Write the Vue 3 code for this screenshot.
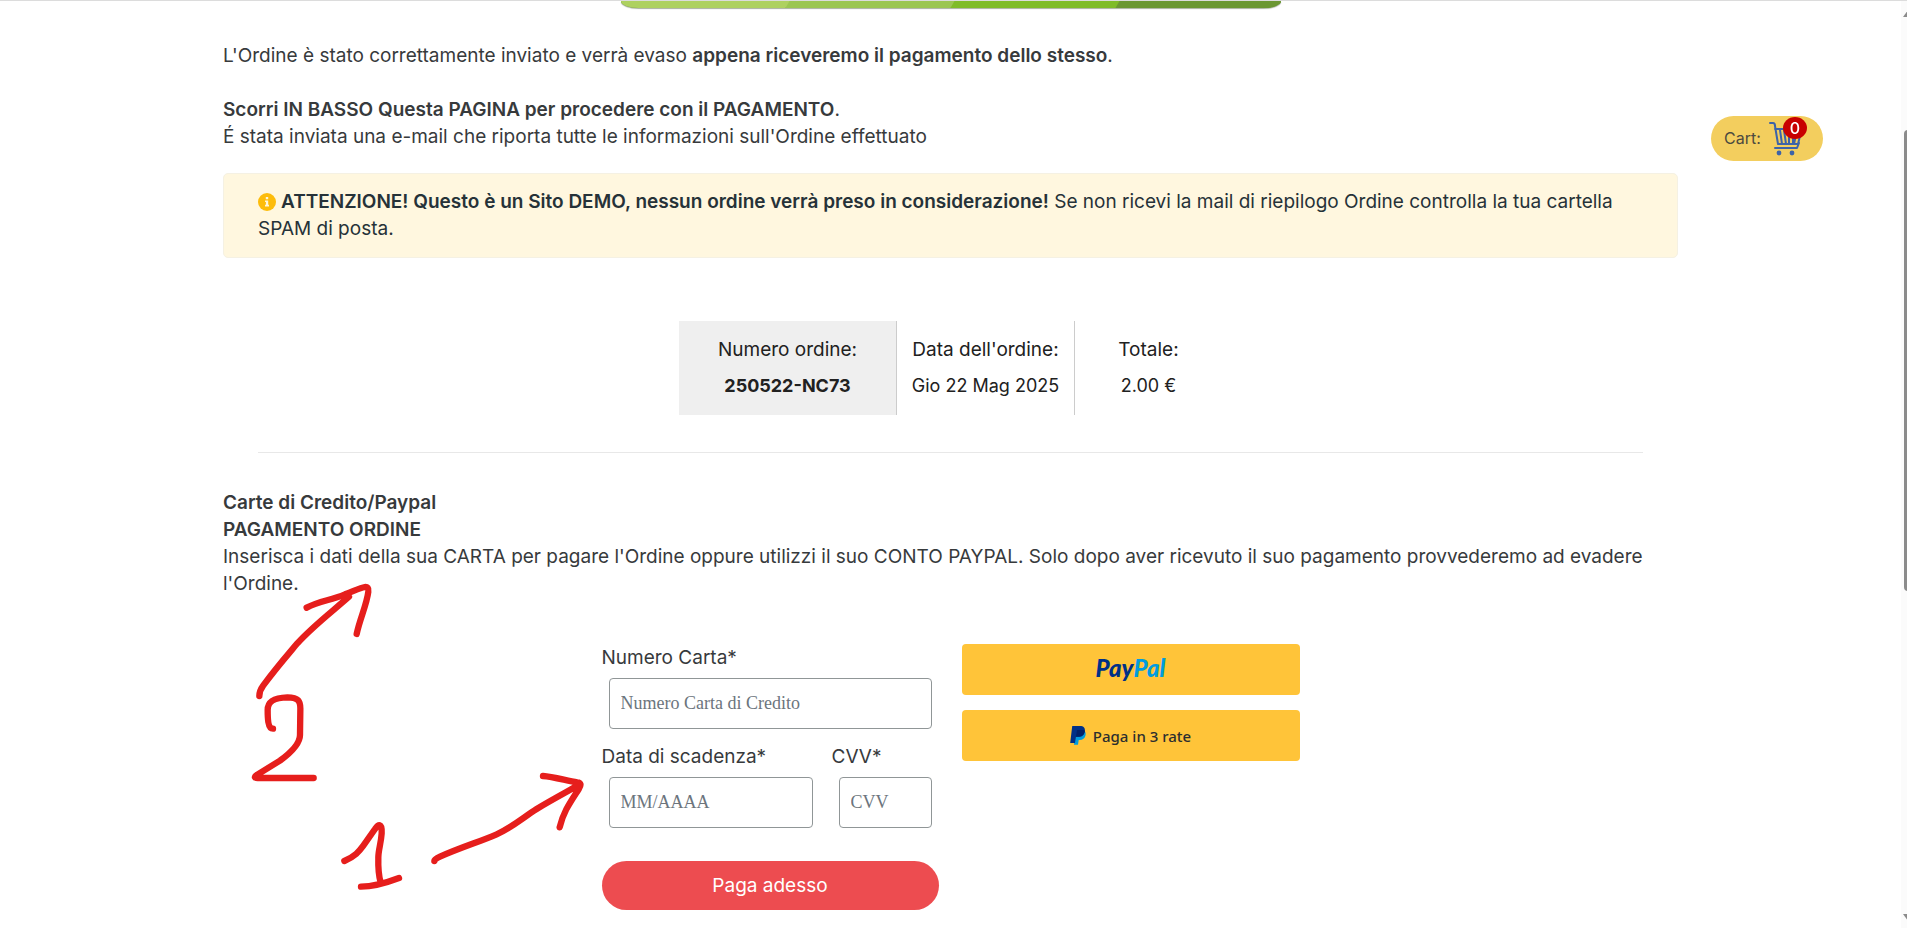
<script setup>
import { ref } from 'vue'

const steps = ['one', 'two', 'three', 'four']
const order = [
  { label: 'Numero ordine:', value: '250522-NC73' },
  { label: "Data dell'ordine:", value: 'Gio 22 Mag 2025' },
  { label: 'Totale:', value: '2.00 €' }
]
const cartCount = ref(0)
const card = ref('')
const expiry = ref('')
const cvv = ref('')
</script>

<template>
  <div class="page">
    <div class="progress">
      <span v-for="s in steps" :key="s" :class="['step', s]"></span>
    </div>

    <main class="content">
      <section class="intro">
        <p>L'Ordine è stato correttamente inviato e verrà evaso <b>appena riceveremo il pagamento dello stesso</b>.</p>
        <p class="spaced"><b>Scorri IN BASSO Questa PAGINA per procedere con il PAGAMENTO</b>.</p>
        <p>É stata inviata una e-mail che riporta tutte le informazioni sull'Ordine effettuato</p>
      </section>

      <p class="notice">
        <svg class="info" viewBox="0 0 18 18" aria-hidden="true">
          <circle cx="9" cy="9" r="9" fill="#fdbc0b" />
          <path d="M7.8 4h2.4v2.2H7.8zM7 7.4h3.2v4.4H11v1.6H7v-1.6h.9V9H7z" fill="#fff6dc" />
        </svg>
        <b>ATTENZIONE! Questo è un Sito DEMO, nessun ordine verrà preso in considerazione!</b> Se non ricevi la mail di riepilogo Ordine controlla la tua cartella SPAM di posta.
      </p>

      <dl class="order">
        <div v-for="(o, i) in order" :key="o.label" :class="['cell', 'c' + i]">
          <dt>{{ o.label }}</dt>
          <dd>{{ o.value }}</dd>
        </div>
      </dl>

      <hr class="rule" />

      <section class="method">
        <p><b>Carte di Credito/Paypal</b></p>
        <p><b>PAGAMENTO ORDINE</b></p>
        <p>Inserisca i dati della sua CARTA per pagare l'Ordine oppure utilizzi il suo CONTO PAYPAL. Solo dopo aver ricevuto il suo pagamento provvederemo ad evadere l'Ordine.</p>
      </section>

      <div class="payment">
        <form class="card-form" @submit.prevent>
          <div class="field">
            <label for="card">Numero Carta*</label>
            <input id="card" v-model="card" type="text" placeholder="Numero Carta di Credito" />
          </div>
          <div class="pair">
            <div class="field">
              <label for="expiry">Data di scadenza*</label>
              <input id="expiry" v-model="expiry" type="text" placeholder="MM/AAAA" />
            </div>
            <div class="field">
              <label for="cvv">CVV*</label>
              <input id="cvv" v-model="cvv" type="text" placeholder="CVV" />
            </div>
          </div>
          <button class="pay" type="submit">Paga adesso</button>
        </form>

        <div class="wallets">
          <button type="button" class="wallet brand"><span class="pp-dark">Pay</span><span class="pp-light">Pal</span></button>
          <button type="button" class="wallet">
            <svg class="pp-mark" viewBox="0 0 46 56" aria-hidden="true">
              <path d="M18 12h20c6 3 9 8 7 16-2 9-8 13-17 13h-3l-2 14H11l2-12z" fill="#009cde" />
              <path d="M6 0h22c12 0 17 6 15 16-2 11-9 16-20 16h-6l-3 18H0z" fill="#003087" />
              <path d="M20 12h19c2 0 3 1 4 1v3c-2 11-9 16-20 16h-6z" fill="#012169" />
            </svg>
            <span>Paga in 3 rate</span>
          </button>
        </div>
      </div>

      <svg class="notes" viewBox="0 0 1110 1020" aria-hidden="true">
        <path d="M88 378Q88 362 100 346C140 292 170 258 202 220C250 167 310 122 357 80M230 113C270 92 300 92 345 73C380 61 420 35 415 65C410 105 390 145 380 192" />
        <path d="M129 476C113 476 113 440 113 420C113 392 135 383 172 382C205 383 212 392 211 420L210 495C210 520 180 550 150 572L82 614Q66 625 85 624H251" />
        <path d="M343 873C375 859 387 845 400 827L435 777C445 762 457 758 455 790C453 820 445 840 445 862C444 900 447 920 452 938M393 950C430 950 470 938 507 924" />
        <path d="M613 873Q613 868 630 860C700 829 745 817 800 793C850 770 880 742 920 717C970 687 1010 666 1045 646M939 618C970 620 1010 632 1042 637Q1058 638 1047 656C1020 698 1000 725 989 772" />
      </svg>
    </main>

    <a class="cart" href="#">
      <span>Cart:</span>
      <svg class="cart-icon" viewBox="0 0 34 36" fill="none" stroke="#3d63a8" stroke-width="2" stroke-linecap="round" stroke-linejoin="round" aria-hidden="true">
        <path d="M2 2h3q2 0 2 3l3 18h20l4-16M7 8h25M12 9l2 14M16 9l2 14M21 9v14M25 9v14M29 9l-3 14M7 27h22l2-5" />
        <circle cx="11" cy="32" r="2.4" fill="#3d63a8" stroke="none" />
        <circle cx="24" cy="32" r="2.4" fill="#3d63a8" stroke="none" />
      </svg>
      <span class="badge">{{ cartCount }}</span>
    </a>

    <div class="scrollbar" aria-hidden="true">
      <i class="arrow up"></i>
      <i class="thumb"></i>
      <i class="arrow down"></i>
    </div>
  </div>
</template>

<style>
body {
  background: #fff;
}
</style>

<style scoped>
.page {
  box-sizing: border-box;
  min-height: 100vh;
  padding: 0 32px 16px 26px;
  border-top: 1px solid #dcdcdc;
  color: #373a3c;
  font-family: Inter, "Open Sans", sans-serif;
  font-size: 19px;
  font-weight: 400;
  line-height: 27px;
  overflow: hidden;
}
p, dl, dd {
  margin: 0;
}
b {
  font-weight: 600;
}
.progress {
  display: flex;
  max-width: 660px;
  height: 7px;
  margin: 0 auto 34px;
  overflow: hidden;
  border-radius: 0 0 20px 20px / 0 0 8px 8px;
  box-shadow: 0 1px 1px #a9b09f;
  background: #6b9732;
}
.step {
  flex: 1;
  margin-right: -4px;
  padding-right: 4px;
  clip-path: polygon(0 0, 100% 0, calc(100% - 4px) 100%, 0 100%);
  position: relative;
}
.one { background: #aed160; z-index: 4; }
.two { background: #9bc651; z-index: 3; }
.three { background: #7fbc28; z-index: 2; }
.four { background: #6b9732; z-index: 1; }
.content {
  position: relative;
  max-width: 1455px;
  margin: 0 auto;
}
.spaced {
  margin-top: 27px;
}
.notice {
  margin-top: 23px;
  padding: 14px 34px 15px;
  border: 1px solid #f5f1e3;
  border-radius: 5px;
  background: #fff7df;
  color: #263238;
}
.info {
  width: 18px;
  height: 18px;
  margin-right: 5px;
  vertical-align: -3px;
}
.order {
  display: flex;
  justify-content: center;
  margin-top: 63px;
  color: #212121;
  text-align: center;
}
.cell {
  box-sizing: border-box;
  height: 94px;
  padding: 15px 10px;
  border-right: 1px solid #ccc;
  white-space: nowrap;
}
.cell dd {
  margin-top: 9px;
  font-size: 18px;
}
.c0 {
  width: 218px;
  background: #efefef;
}
.c0 dd {
  font-weight: 700;
}
.c1 {
  width: 178px;
}
.c2 {
  width: 147px;
  border: 0;
}
.rule {
  margin: 37px 35px 36px;
  border: 0;
  border-top: 1px solid #e8e8e8;
}
.payment {
  display: flex;
  justify-content: center;
  align-items: flex-start;
  gap: 23px;
  margin-top: 47px;
}
.card-form {
  width: 337px;
}
.field {
  display: flex;
  flex-direction: column;
  gap: 7px;
}
.field input {
  box-sizing: border-box;
  width: calc(100% - 14px);
  height: 51px;
  margin: 0 7px;
  padding: 0 11px;
  border: 1px solid #909697;
  border-radius: 4px;
  background: #fff;
  font: 18px "Liberation Serif", serif;
}
.field input::placeholder {
  color: #6c757d;
  opacity: 1;
}
.pair {
  display: grid;
  grid-template-columns: 218px 1fr;
  gap: 12px;
  margin-top: 14px;
}
.pay {
  width: 100%;
  height: 49px;
  margin-top: 33px;
  border: 0;
  border-radius: 25px;
  background: #ed4c50;
  color: #fff;
  font: 400 19px/27px Inter, sans-serif;
}
.wallets {
  display: flex;
  flex-direction: column;
  gap: 15px;
  width: 338px;
}
.wallet {
  display: flex;
  align-items: center;
  justify-content: center;
  gap: 7px;
  height: 51px;
  padding: 0;
  border: 0;
  border-radius: 4px;
  background: #ffc439;
  color: #2c2e2f;
  font: 500 15px "Noto Sans", sans-serif;
}
.brand {
  gap: 0;
  padding-bottom: 4px;
  font: italic 900 24px Lato, sans-serif;
}
.pp-dark {
  color: #003087;
}
.pp-light {
  color: #009cde;
}
.pp-mark {
  width: 16px;
  height: 19px;
}
.notes {
  position: absolute;
  left: 7px;
  top: 528px;
  width: 370px;
  height: 340px;
  fill: none;
  stroke: #e61e1c;
  stroke-width: 19;
  stroke-linecap: round;
  stroke-linejoin: round;
  pointer-events: none;
}
.cart {
  position: fixed;
  top: 116px;
  right: 84px;
  box-sizing: border-box;
  display: flex;
  align-items: center;
  gap: 7px;
  width: 112px;
  height: 45px;
  padding: 0 13px;
  border-radius: 23px;
  background: #f3ce5e;
  color: #4c4a40;
  font-size: 16px;
  text-decoration: none;
}
.cart-icon {
  flex: none;
  width: 34px;
  height: 36px;
}
.badge {
  position: absolute;
  top: 1px;
  right: 16px;
  width: 24px;
  height: 22px;
  border-radius: 50%;
  background: #c80000;
  color: #fff;
  font-size: 16px;
  font-weight: 500;
  line-height: 22px;
  text-align: center;
}
.scrollbar {
  position: fixed;
  top: 1px;
  right: 0;
  bottom: 0;
  width: 6px;
  background: #fbfbfb;
  overflow: hidden;
}
.thumb {
  position: absolute;
  top: 129px;
  left: 3px;
  width: 8px;
  height: 461px;
  border-radius: 4px;
  background: #8b8b8b;
}
.arrow {
  position: absolute;
  left: 2px;
  border: 5px solid transparent;
}
.up {
  top: 4px;
  border-bottom: 7px solid #8b8b8b;
}
.down {
  bottom: 2px;
  border-top: 7px solid #8b8b8b;
}
</style>
